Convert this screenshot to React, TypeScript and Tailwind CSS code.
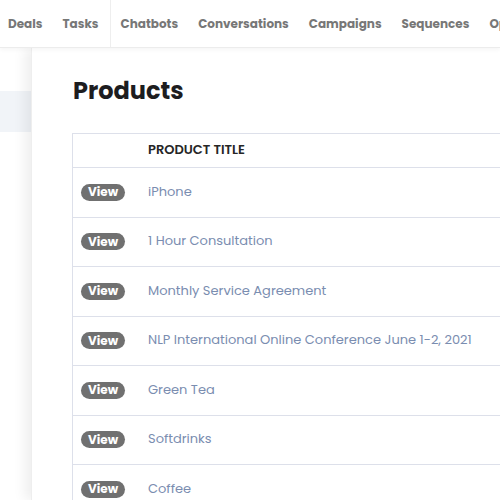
import React from 'react';

const navItems = ['Deals', 'Tasks', 'Chatbots', 'Conversations', 'Campaigns', 'Sequences', 'Opportunities'];

const products = [
  'iPhone',
  '1 Hour Consultation',
  'Monthly Service Agreement',
  'NLP International Online Conference June 1-2, 2021',
  'Green Tea',
  'Softdrinks',
  'Coffee',
];

const App: React.FC = () => {
  return (
    <div
      className="w-[500px] h-[500px] overflow-hidden bg-white flex flex-col"
      style={{ fontFamily: 'Poppins, Inter, "Noto Sans", sans-serif' }}
    >
      {/* top nav */}
      <div className="h-[48px] shrink-0 flex items-center bg-white border-b border-[#ececec] shadow-[0_2px_4px_rgba(0,0,0,0.04)] z-10 whitespace-nowrap overflow-hidden pl-[8px]">
        {navItems.map((item, i) => (
          <div key={item} className="flex items-center h-full shrink-0">
            {i === 2 && <div className="w-px h-full bg-[#eeeeee] -ml-[9px] mr-[10px]" />}
            <span className="mr-[20px] text-[12px] font-bold text-[#777777]">{item}</span>
          </div>
        ))}
      </div>

      <div className="flex flex-1 min-h-0">
        {/* sidebar */}
        <div className="w-[31px] shrink-0 bg-white flex flex-col">
          <div className="h-[43px]" />
          <div className="h-[41px] bg-[#f1f4f8]" />
        </div>

        {/* main */}
        <div className="flex-1 bg-white shadow-[-6px_0_12px_rgba(0,0,0,0.07)] border-l border-[#eeeeee] pl-[40px] pt-[28px]">
          <h1 className="text-[24px] font-bold text-[#1d1d1f] leading-[30px] pl-px">Products</h1>
          <div className="mt-[27px] border-l border-t border-[#dde0ea]">
            <div className="h-[34px] flex items-center pb-[2px] border-b border-[#dde0ea]">
              <div className="w-[75px]" />
              <span className="text-[13px] font-semibold text-[#262626] uppercase">Product Title</span>
            </div>
            {products.map((p) => (
              <div key={p} className="h-[49.5px] flex items-center pb-[2px] border-b border-[#dde0ea] whitespace-nowrap">
                <div className="w-[75px] pl-[8px]">
                  <span className="inline-flex items-center justify-center w-[44px] h-[17px] rounded-full bg-[#707070] text-white text-[12px] font-bold">
                    View
                  </span>
                </div>
                <span className="text-[13px] text-[#7a8db0]">{p}</span>
              </div>
            ))}
          </div>
        </div>
      </div>
    </div>
  );
};

export default App;
